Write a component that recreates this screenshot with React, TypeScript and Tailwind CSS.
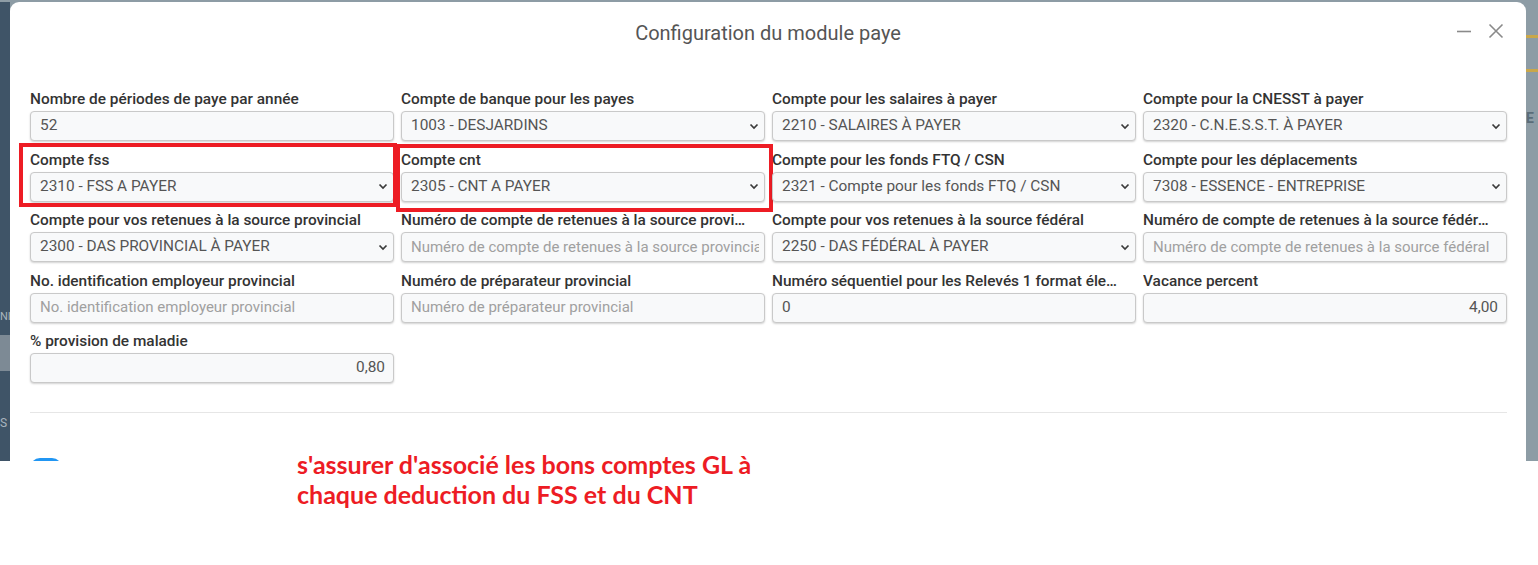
import React from "react";

type Field = {
  label: string;
  kind: "select" | "input";
  value?: string;
  placeholder?: string;
  right?: boolean;
  mark?: "fss" | "cnt";
};

const rows: Field[][] = [
  [
    { label: "Nombre de périodes de paye par année", kind: "input", value: "52" },
    { label: "Compte de banque pour les payes", kind: "select", value: "1003 - DESJARDINS" },
    { label: "Compte pour les salaires à payer", kind: "select", value: "2210 - SALAIRES À PAYER" },
    { label: "Compte pour la CNESST à payer", kind: "select", value: "2320 - C.N.E.S.S.T. À PAYER" },
  ],
  [
    { label: "Compte fss", kind: "select", value: "2310 - FSS A PAYER", mark: "fss" },
    { label: "Compte cnt", kind: "select", value: "2305 - CNT A PAYER", mark: "cnt" },
    { label: "Compte pour les fonds FTQ / CSN", kind: "select", value: "2321 - Compte pour les fonds FTQ / CSN" },
    { label: "Compte pour les déplacements", kind: "select", value: "7308 - ESSENCE - ENTREPRISE" },
  ],
  [
    { label: "Compte pour vos retenues à la source provincial", kind: "select", value: "2300 - DAS PROVINCIAL À PAYER" },
    {
      label: "Numéro de compte de retenues à la source provincial",
      kind: "input",
      placeholder: "Numéro de compte de retenues à la source provincial",
    },
    { label: "Compte pour vos retenues à la source fédéral", kind: "select", value: "2250 - DAS FÉDÉRAL À PAYER" },
    {
      label: "Numéro de compte de retenues à la source fédéral",
      kind: "input",
      placeholder: "Numéro de compte de retenues à la source fédéral",
    },
  ],
  [
    { label: "No. identification employeur provincial", kind: "input", placeholder: "No. identification employeur provincial" },
    { label: "Numéro de préparateur provincial", kind: "input", placeholder: "Numéro de préparateur provincial" },
    { label: "Numéro séquentiel pour les Relevés 1 format électronique", kind: "input", value: "0" },
    { label: "Vacance percent", kind: "input", value: "4,00", right: true },
  ],
  [{ label: "% provision de maladie", kind: "input", value: "0,80", right: true }],
];

function Chevron() {
  return (
    <svg width="10" height="7" viewBox="0 0 10 7" className="shrink-0">
      <path d="M1.5 1.5 L5 5 L8.5 1.5" fill="none" stroke="#3a3a3a" strokeWidth="1.7" />
    </svg>
  );
}

function FormField({ field }: { field: Field }) {
  return (
    <div className="relative min-w-0">
      {/* red highlight boxes from the annotated screenshot */}
      {field.mark === "fss" && (
        <div className="pointer-events-none absolute left-[-11px] top-[-7px] h-[64px] w-[378px] border-[4px] border-[#ed1c24]" />
      )}
      {field.mark === "cnt" && (
        <div className="pointer-events-none absolute left-[-5px] top-[-6px] h-[68px] w-[377px] border-[4px] border-[#ed1c24]" />
      )}
      <div className="h-[20px] truncate pr-[18px] text-[15.4px] font-medium leading-[20px] text-[#333]">{field.label}</div>
      <div className="mt-[2px] flex h-[30px] items-center rounded-[4px] border border-[#c9c9c9] bg-[#f8f9fa] pl-[9px] pr-[5px] text-[15.4px] shadow-[0_1px_2px_rgba(0,0,0,0.18)]">
        {field.value !== undefined ? (
          <span className={`flex-1 overflow-hidden whitespace-nowrap text-[#555] ${field.right ? "pr-[3px] text-right" : ""}`}>
            {field.value}
          </span>
        ) : (
          <span className="flex-1 overflow-hidden whitespace-nowrap text-[15px] text-[#a0a0a0]">{field.placeholder}</span>
        )}
        {field.kind === "select" && <Chevron />}
      </div>
    </div>
  );
}

export default function App() {
  return (
    <div className="relative h-[565px] w-[1538px] overflow-hidden bg-white font-['Roboto',sans-serif]">
      <div className="flex h-[461px] items-start overflow-hidden bg-[#8d9ca5] pt-[2px]">
        {/* left edge of the page behind the dialog */}
        <div className="flex h-[459px] w-[10px] shrink-0 flex-col bg-[#3f5467]">
          <div className="mt-[308px] h-[14px] shrink-0 text-[11px] leading-[14px] text-[#a9b4be]">NI</div>
          <div className="mt-[11px] h-[36px] shrink-0 bg-[#7d8a95]" />
          <div className="mt-[45px] shrink-0 text-[12px] leading-[14px] text-[#a9b4be]">S</div>
        </div>

        {/* dialog */}
        <div className="w-[1516px] shrink-0 rounded-t-[9px] bg-white pb-[20px]">
          <div className="relative flex h-[62px] items-center justify-center">
            <h2 className="text-[20px] font-normal text-[#555]">Configuration du module paye</h2>
            <div className="absolute right-[22px] top-[21px] flex items-center gap-[16px]">
              <svg width="16" height="16" viewBox="0 0 16 16">
                <path d="M1 8.5 H15" stroke="#8a8a8a" strokeWidth="1.6" />
              </svg>
              <svg width="16" height="16" viewBox="0 0 16 16">
                <path d="M1.5 1.5 L14.5 14.5 M14.5 1.5 L1.5 14.5" stroke="#8a8a8a" strokeWidth="1.6" />
              </svg>
            </div>
          </div>

          <div className="pl-[20px] pr-[19px] pt-[25px]">
            <div className="flex flex-col gap-[8.5px]">
              {rows.map((row, i) => (
                <div key={i} className="grid grid-cols-4 gap-x-[7px]">
                  {row.map((f) => (
                    <FormField key={f.label} field={f} />
                  ))}
                </div>
              ))}
            </div>

            <div className="mt-[29px] h-px bg-[#e6e6e6]" />

            <div className="mt-[45px] h-[20px] w-[32px] rounded-full bg-[#2196f3]" />
          </div>
        </div>

        {/* right edge of the page behind the dialog */}
        <div className="flex w-[12px] shrink-0 flex-col">
          <div className="mt-[33px] h-[3px] bg-[#c9a74a]" />
          <div className="mt-[31px] h-[3px] bg-[#c9a74a]" />
          <div className="mt-[36px] text-[14px] font-bold leading-[20px] text-[#5a6c78]">E</div>
        </div>
      </div>

      {/* annotation */}
      <div className="absolute left-[297px] top-[449px] font-['Lato',sans-serif] text-[25px] font-bold leading-[30px] text-[#ed1c24]">
        <div>s'assurer d'associé les bons comptes GL à</div>
        <div>chaque deduction du FSS et du CNT</div>
      </div>
    </div>
  );
}
